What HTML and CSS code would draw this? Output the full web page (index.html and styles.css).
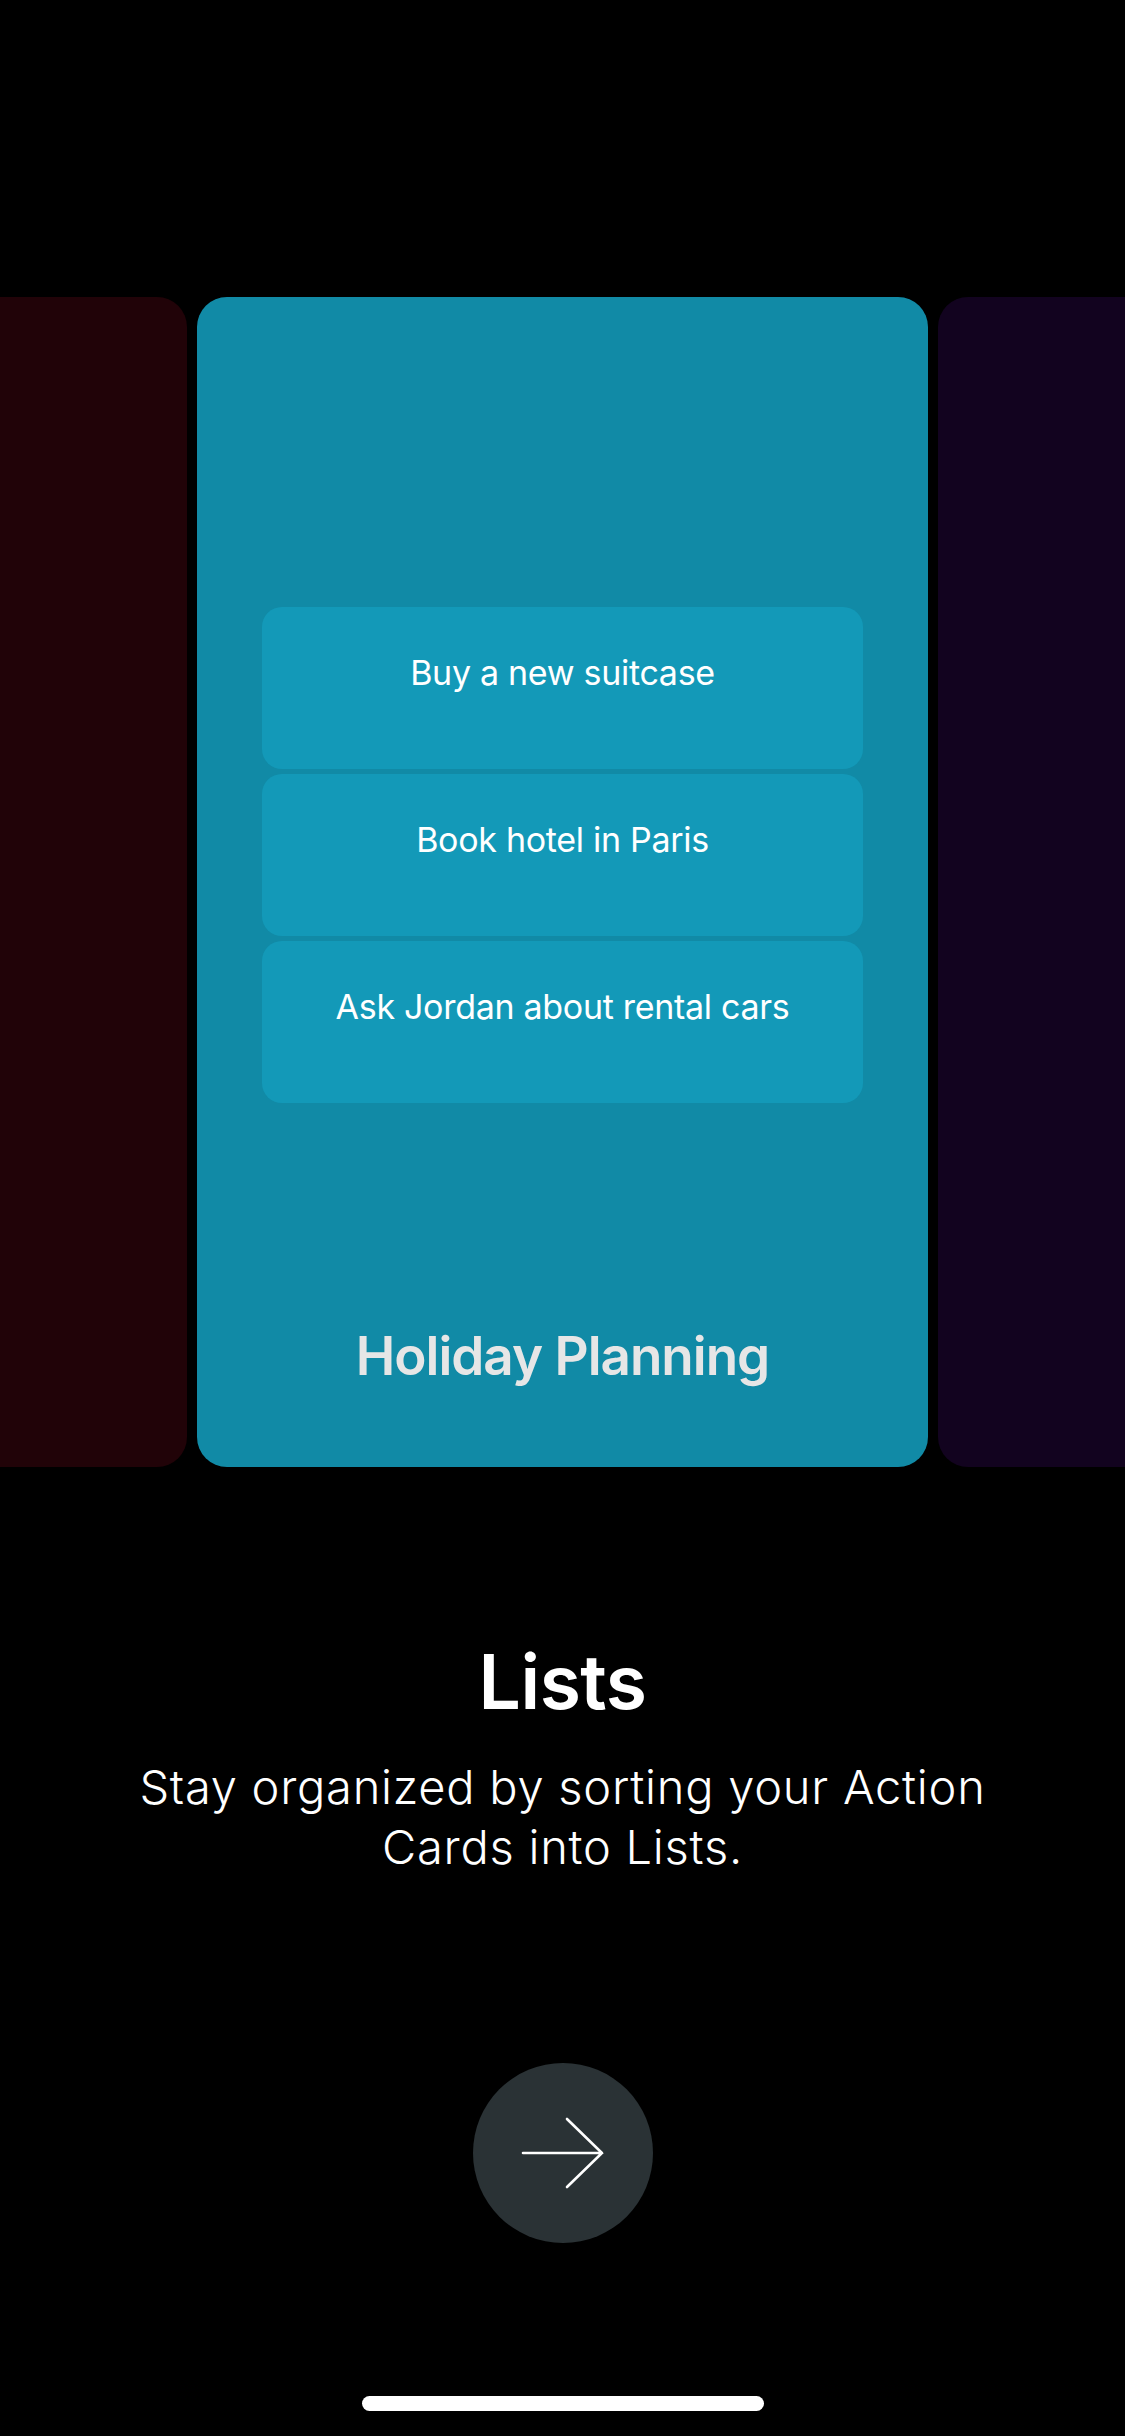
FILE: index.html
```html
<!DOCTYPE html>
<html lang="en">
<head>
<meta charset="utf-8">
<title>Lists</title>
<link rel="stylesheet" href="styles.css">
</head>
<body>
<main class="screen">
  <section class="carousel">
    <div class="card card-side card-red"></div>
    <div class="card card-main">
      <div class="items">
        <div class="item">Buy a new suitcase</div>
        <div class="item">Book hotel in Paris</div>
        <div class="item">Ask Jordan about rental cars</div>
      </div>
      <h2 class="card-title">Holiday Planning</h2>
    </div>
    <div class="card card-side card-purple"></div>
  </section>
  <h1 class="heading">Lists</h1>
  <p class="desc">Stay organized by sorting your Action Cards into Lists.</p>
  <button class="next" type="button" aria-label="Next">
    <svg viewBox="0 0 180 180" width="180" height="180">
      <path d="M50 90 H129 M94 56 L129 90 L94 124" fill="none" stroke="#ffffff" stroke-width="2.6" stroke-linecap="round" stroke-linejoin="miter"/>
    </svg>
  </button>
  <div class="home-indicator"></div>
</main>
</body>
</html>
```
FILE: styles.css
```css
html, body {
  margin: 0;
  padding: 0;
  background: #000;
}
body {
  width: 1125px;
  height: 2436px;
  overflow: hidden;
  font-family: Inter, "Noto Sans", "Liberation Sans", sans-serif;
  color: #fff;
}
.screen {
  display: flex;
  flex-direction: column;
  align-items: center;
  width: 1125px;
  height: 2436px;
}
.carousel {
  margin-top: 297px;
  width: 1125px;
  height: 1170px;
  display: flex;
  justify-content: center;
  gap: 10px;
  overflow: hidden;
  flex-shrink: 0;
}
.card {
  flex-shrink: 0;
  height: 1170px;
  border-radius: 30px;
  box-sizing: border-box;
}
.card-side {
  width: 300px;
}
.card-red {
  background: #210308;
}
.card-purple {
  background: #12031f;
}
.card-main {
  width: 731px;
  background: #118aa6;
  padding: 310px 65px 0;
  display: flex;
  flex-direction: column;
  align-items: stretch;
}
.items {
  display: flex;
  flex-direction: column;
  gap: 5px;
}
.item {
  height: 162px;
  box-sizing: border-box;
  padding-top: 45px;
  background: #1399b8;
  border-radius: 20px;
  text-align: center;
  font-size: 34px;
  line-height: 42px;
  font-weight: 400;
  letter-spacing: -0.3px;
  color: #fff;
}
.card-title {
  margin: 220px 0 0;
  text-align: center;
  font-size: 53px;
  line-height: 66px;
  font-weight: 600;
  color: #e6e6e6;
  letter-spacing: -1px;
}
.heading {
  margin: 170px 0 0;
  font-size: 75px;
  line-height: 90px;
  font-weight: 600;
  letter-spacing: -0.5px;
  text-align: center;
}
.desc {
  margin: 30px 0 0;
  max-width: 920px;
  font-size: 47px;
  line-height: 60px;
  font-weight: 300;
  text-align: center;
  letter-spacing: 0.75px;
}
.next {
  margin-top: 186px;
  width: 180px;
  height: 180px;
  padding: 0;
  border: 0;
  border-radius: 50%;
  background: #2a3235;
  display: flex;
  align-items: center;
  justify-content: center;
  flex-shrink: 0;
}
.next svg {
  display: block;
}
.home-indicator {
  margin-top: 153px;
  width: 402px;
  height: 15px;
  border-radius: 8px;
  background: #fff;
  flex-shrink: 0;
}
```
